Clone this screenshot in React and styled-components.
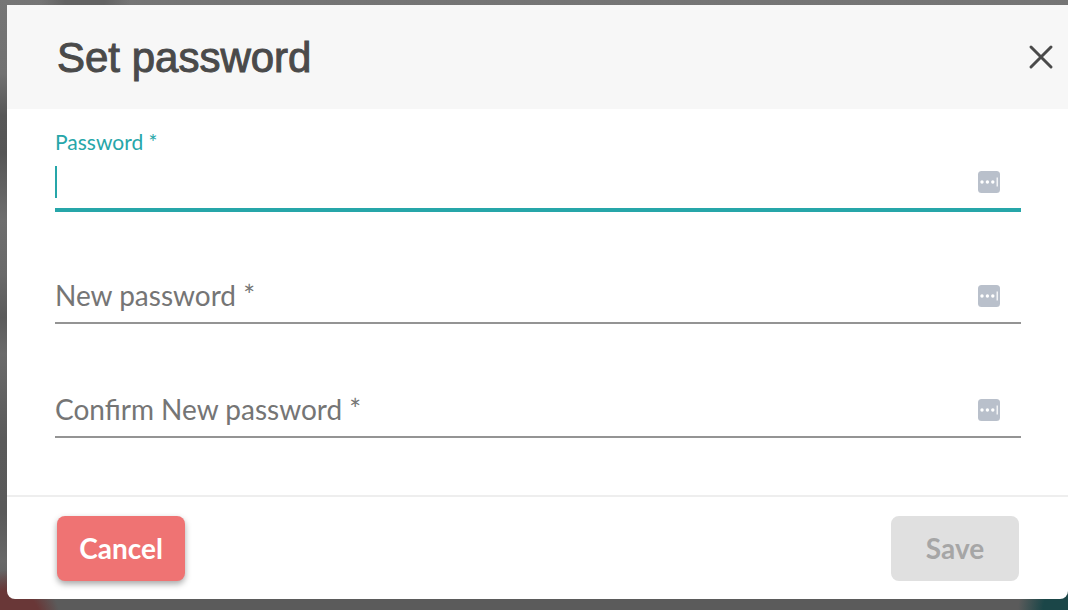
import React, { useState } from 'react';
import styled, { createGlobalStyle } from 'styled-components';

const GlobalStyle = createGlobalStyle`
  * {
    box-sizing: border-box;
  }
  body {
    margin: 0;
    font-family: Lato, sans-serif;
  }
`;

const Backdrop = styled.div`
  min-height: 100vh;
  padding: 5px 0 11px 7px;
  background:
    radial-gradient(circle at 10px 620px, #693737 30px, transparent 50px),
    radial-gradient(circle at right bottom, #1b4648 25px, transparent 50px),
    radial-gradient(ellipse at 85px 0, #636363 20px, transparent 45px),
    linear-gradient(#757575, #717171 12%, #575757 19%, #555 25%, #6e6e6e 36%, #696969 45%, #5b5b5b 52%, #6a6a6a 58%, #5a5a5a 72%, #595959 84%, #686868 92%, #5b5b5b 98%);
`;

const Dialog = styled.form`
  border-radius: 0 0 8px 8px;
  background: #fff;
  overflow: hidden;
`;

const Header = styled.header`
  display: flex;
  align-items: center;
  justify-content: space-between;
  height: 104px;
  padding: 0 12px 0 50px;
  background: #f7f7f7;
  color: #4a4a4a;
`;

const Title = styled.h1`
  margin: 0;
  padding-top: 2px;
  font-family: 'Liberation Sans', sans-serif;
  font-size: 42px;
  font-weight: 400;
  line-height: 48px;
  -webkit-text-stroke: 1px currentColor;
`;

const CloseButton = styled.button`
  display: flex;
  padding: 0;
  border: 0;
  background: none;
  color: inherit;
  cursor: pointer;
`;

const Body = styled.div`
  padding: 17px 47px 27px 48px;
`;

const Field = styled.div`
  position: relative;
  height: 114px;
  padding-top: 36px;
`;

const Control = styled.div`
  display: flex;
  align-items: flex-start;
  padding-right: 20px;
  border-bottom: ${(props) => (props.$active ? '4px solid #26a6a9' : '2px solid #949494')};
`;

const Label = styled.label`
  position: absolute;
  left: 0;
  top: ${(props) => (props.$floating ? '3px' : '38px')};
  color: ${(props) => (props.$active ? '#26a6a9' : '#757575')};
  font-size: ${(props) => (props.$floating ? '21px' : '28px')};
  line-height: ${(props) => (props.$floating ? '26px' : '34px')};
  pointer-events: none;
`;

const Input = styled.input`
  flex: 1;
  min-width: 0;
  height: 46px;
  padding: 0;
  border: 0;
  outline: 0;
  background: ${(props) => props.$caret
    ? 'linear-gradient(#26a6a9, #26a6a9) 0 4px / 2px 32px no-repeat'
    : 'none'};
  caret-color: ${(props) => (props.$caret ? 'transparent' : '#26a6a9')};
  font-family: inherit;
  font-size: 28px;
`;

const FieldIcon = styled.svg`
  width: 24px;
  height: 24px;
  margin-top: 8px;
`;

const Footer = styled.footer`
  display: flex;
  justify-content: space-between;
  padding: 19px 49px 18px 50px;
  border-top: 2px solid #eee;
`;

const Button = styled.button`
  width: 128px;
  height: 65px;
  padding: 0 0 2px;
  border: 0;
  border-radius: 8px;
  background: ${(props) => (props.$danger ? '#ef7373' : '#26a6a9')};
  box-shadow: 0 3px 6px rgba(0, 0, 0, 0.35);
  color: #fff;
  font-family: inherit;
  font-size: 28px;
  font-weight: 700;
  line-height: 34px;
  cursor: pointer;
  &:disabled {
    background: #e0e0e0;
    box-shadow: none;
    color: #a6a6a6;
    cursor: default;
  }
`;

const CloseIcon = () => (
  <svg width="30" height="30" viewBox="0 0 30 30" fill="none" stroke="currentColor" strokeWidth="3" strokeLinecap="round" aria-hidden="true">
    <path d="M5 5l20 20M25 5L5 25" />
  </svg>
);

const PasswordIcon = () => (
  <FieldIcon viewBox="0 0 24 24" fill="#fff" aria-hidden="true">
    <rect x="1" y="1" width="22" height="22" rx="3.5" fill="#b9c0cb" />
    <circle cx="5" cy="12" r="1.7" />
    <circle cx="10.4" cy="12" r="1.7" />
    <circle cx="15.8" cy="12" r="1.7" />
    <rect x="19.6" y="7.5" width="1.2" height="9" />
  </FieldIcon>
);

const fields = [
  { id: 'password', label: 'Password' },
  { id: 'newPassword', label: 'New password' },
  { id: 'confirmPassword', label: 'Confirm New password' },
];

const App = () => {
  const [active, setActive] = useState('password');
  const [values, setValues] = useState({ password: '', newPassword: '', confirmPassword: '' });

  const canSave =
    values.password && values.newPassword && values.newPassword === values.confirmPassword;

  return (
    <Backdrop>
      <GlobalStyle />
      <Dialog role="dialog" aria-labelledby="dialog-title" onSubmit={(e) => e.preventDefault()}>
        <Header>
          <Title id="dialog-title">Set password</Title>
          <CloseButton type="button" aria-label="Close">
            <CloseIcon />
          </CloseButton>
        </Header>
        <Body>
          {fields.map(({ id, label }) => {
            const isActive = active === id;
            return (
              <Field key={id}>
                <Control $active={isActive}>
                  <Input
                    id={id}
                    type="password"
                    required
                    autoFocus={id === 'password'}
                    value={values[id]}
                    $caret={isActive && !values[id]}
                    onFocus={() => setActive(id)}
                    onChange={(e) => setValues({ ...values, [id]: e.target.value })}
                  />
                  <PasswordIcon />
                </Control>
                <Label htmlFor={id} $active={isActive} $floating={isActive || values[id] !== ''}>
                  {label} *
                </Label>
              </Field>
            );
          })}
        </Body>
        <Footer>
          <Button type="button" $danger>Cancel</Button>
          <Button type="submit" disabled={!canSave}>Save</Button>
        </Footer>
      </Dialog>
    </Backdrop>
  );
};

export default App;
